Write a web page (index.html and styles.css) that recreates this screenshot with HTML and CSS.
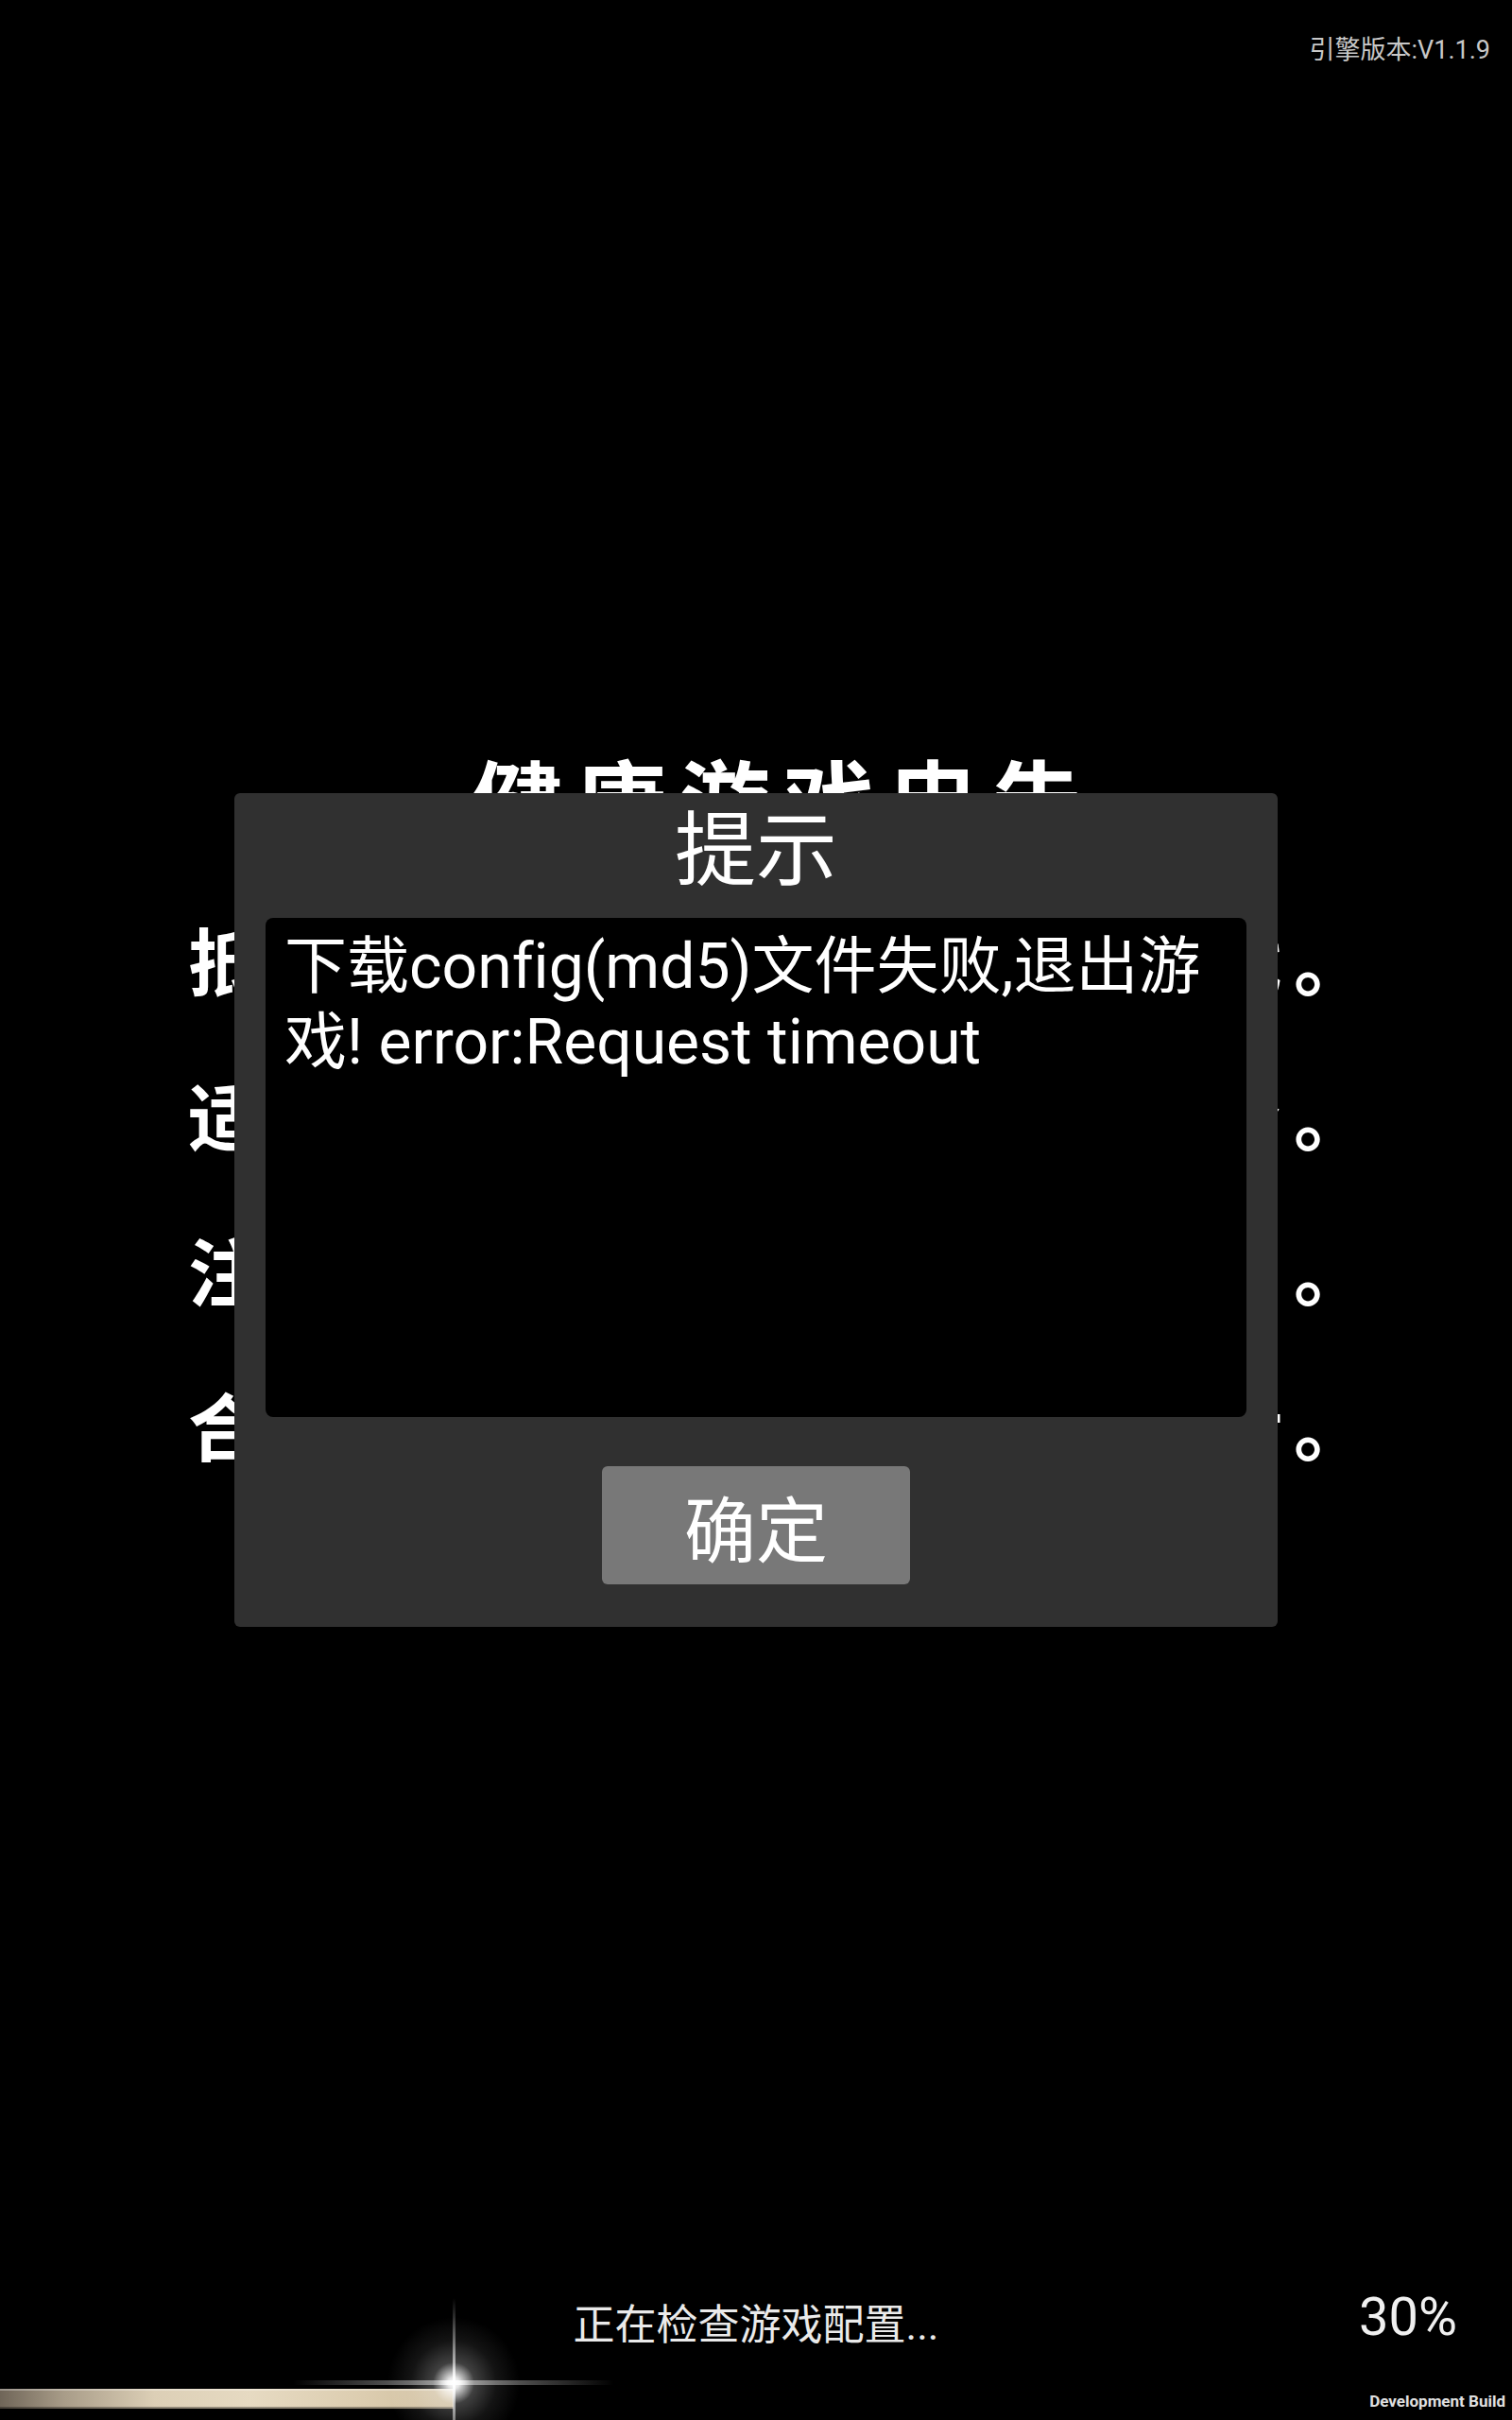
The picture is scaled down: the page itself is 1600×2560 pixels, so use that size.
FILE: index.html
```html
<!DOCTYPE html>
<html lang="zh-CN">
<head>
  <meta charset="UTF-8">
  <title>游戏加载</title>
  <meta name="viewport" content="width=device-width, initial-scale=1.0">
  <link rel="stylesheet" href="styles.css">
</head>
<body>

  <div class="screen">

    <div class="top-bar">
      <span class="engine-ver">引擎版本:V1.1.9</span>
    </div>

    <div class="notice">
      <h1>健康游戏忠告</h1>
      <p>抵制不良游戏，拒绝盗版游戏。</p>
      <p>适度游戏益脑，沉迷游戏伤身。</p>
      <p>注意自我保护，谨防受骗上当。</p>
      <p>合理安排时间，享受健康生活。</p>
    </div>

    <div class="spacer"></div>

    <div class="loading">
      <span></span>
      <span class="loading-text">正在检查游戏配置...</span>
      <span class="loading-pct">30%</span>
    </div>

    <div class="progress">
      <div class="progress-fill" style="width: 30%"><span class="glint"></span></div>
      <span class="dev-build">Development Build</span>
    </div>

    <!-- alert popup -->
    <div class="dialog-mask">
      <div class="dialog">
        <div class="dialog-title">提示</div>
        <div class="dialog-body">下载config(md5)文件失败,退出游戏! error:Request timeout</div>
        <div class="dialog-actions">
          <button class="dialog-btn">确定</button>
        </div>
      </div>
    </div>

  </div>

</body>
</html>
```

FILE: styles.css
```css
body {
  margin: 0;
  background: #000;
  color: #fff;
  font-family: Roboto, "Noto Sans CJK SC", sans-serif;
  font-variant-ligatures: none;
}
.screen {
  position: relative;
  width: 1600px;
  height: 2560px;
  overflow: hidden;
  display: flex;
  flex-direction: column;
}

.top-bar {
  padding: 37px 23px 0 0;
  text-align: right;
  font-size: 27px;
  line-height: 32px;
  color: #c8c8c8;
}

/* health advisory behind the popup */
.notice {
  margin-top: 708px;
  padding-left: 58px;
  text-align: center;
  font-weight: 700;
  filter: blur(0.6px);
}
.notice h1 {
  margin: 0 0 13px;
  font-size: 96px;
  line-height: 150px;
  letter-spacing: 14px;
}
.notice p {
  margin: 0;
  font-size: 78px;
  line-height: 164px;
  letter-spacing: 12px;
}

.spacer {
  flex: 1;
}

.loading {
  height: 120px;
  display: grid;
  grid-template-columns: 1fr auto 1fr;
  align-items: center;
}
.loading-text {
  font-size: 44px;
  line-height: 1;
  color: #eaeaea;
}
.loading-pct {
  justify-self: end;
  padding-right: 58px;
  margin-bottom: 18px;
  font-size: 56px;
  line-height: 1;
  color: #f0f0f0;
}

.progress {
  height: 40px;
  display: flex;
  align-items: center;
  justify-content: space-between;
}
.progress-fill {
  position: relative;
  height: 21px;
  margin-bottom: 5px;
  background: linear-gradient(to right, #6f6558 0%, #a89c88 14%, #dccfb6 34%, #e6dac2 55%, #dccdb0 80%, #cfbe9e 100%);
  box-shadow: inset 0 2px 0 rgba(255, 255, 255, 0.3), inset 0 -2px 0 rgba(0, 0, 0, 0.35);
}
.glint {
  position: absolute;
  left: calc(100% - 170px);
  top: calc(50% - 17px - 90px);
  width: 340px;
  height: 180px;
  background:
    radial-gradient(circle, #fff 0, rgba(255, 255, 255, 0.9) 6px, rgba(255, 255, 255, 0.25) 22px, rgba(255, 255, 255, 0.08) 45px, transparent 70px),
    linear-gradient(to right, transparent, rgba(220, 220, 220, 0.55) 45%, #fff 50%, rgba(220, 220, 220, 0.55) 55%, transparent) center / 100% 5px no-repeat,
    linear-gradient(to bottom, transparent, rgba(230, 230, 230, 0.7) 40%, #fff 50%, rgba(230, 230, 230, 0.7) 60%, transparent) center / 3px 100% no-repeat;
}
.dev-build {
  padding-right: 7px;
  font-size: 17px;
  font-weight: 700;
  line-height: 1;
  color: #e0e0e0;
}

/* popup */
.dialog-mask {
  position: absolute;
  inset: 0;
  display: flex;
  justify-content: center;
  align-items: flex-start;
  padding-top: 839px;
}
.dialog {
  width: 1104px;
  height: 882px;
  box-sizing: border-box;
  padding: 0 33px;
  background: #303030;
  border-radius: 6px;
  display: flex;
  flex-direction: column;
}
.dialog-title {
  height: 124px;
  margin-bottom: 8px;
  font-size: 86px;
  line-height: 124px;
  text-align: center;
}
.dialog-body {
  height: 528px;
  box-sizing: border-box;
  padding: 12px 20px;
  background: #000;
  border-radius: 8px;
  font-size: 66px;
  line-height: 80px;
}
.dialog-actions {
  margin-top: 52px;
  display: flex;
  justify-content: center;
}
.dialog-btn {
  width: 326px;
  height: 125px;
  border: none;
  border-radius: 6px;
  background: #787878;
  color: #fff;
  font-family: inherit;
  font-size: 76px;
  padding: 0;
}
```
